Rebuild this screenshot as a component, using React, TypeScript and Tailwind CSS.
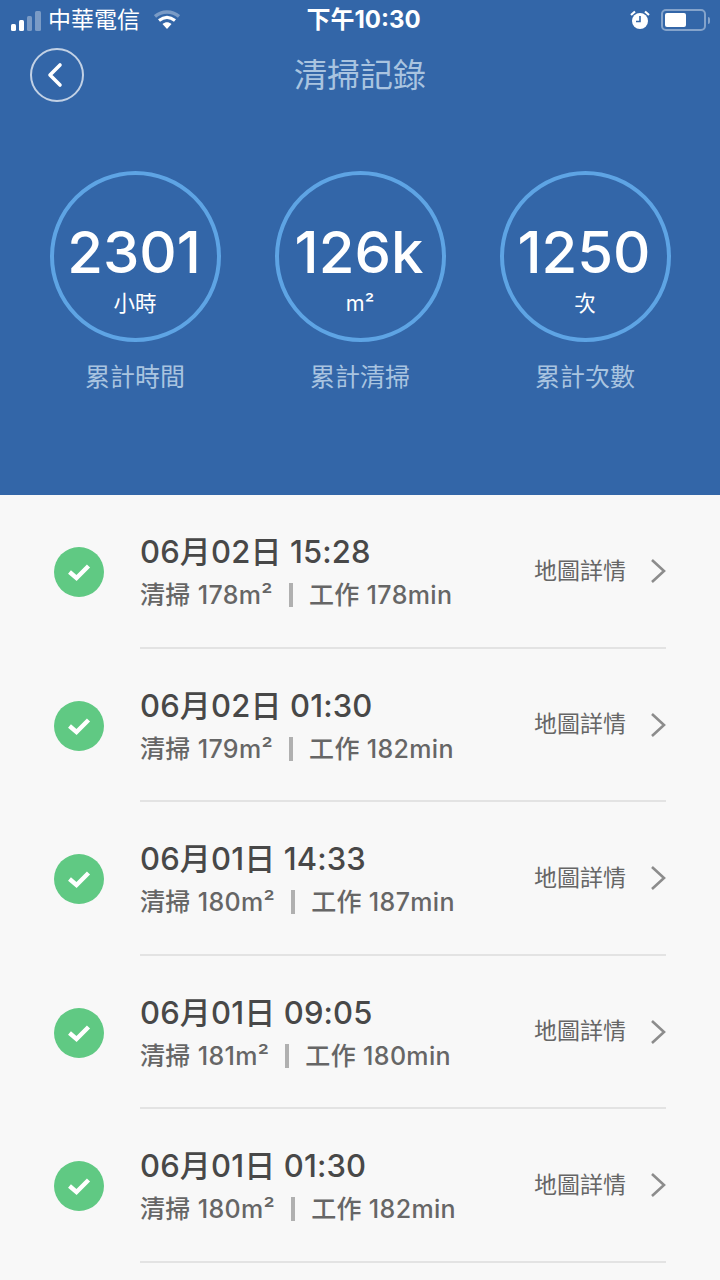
const cjk = "font-['Inter','Noto_Sans_CJK_TC',sans-serif]"

const stats = [
  { value: '2301', unit: '小時', label: '累計時間' },
  { value: '126k', unit: 'm²', label: '累計清掃' },
  { value: '1250', unit: '次', label: '累計次數' },
]

const records = [
  { date: '06月02日 15:28', area: '清掃 178m²', work: '工作 178min' },
  { date: '06月02日 01:30', area: '清掃 179m²', work: '工作 182min' },
  { date: '06月01日 14:33', area: '清掃 180m²', work: '工作 187min' },
  { date: '06月01日 09:05', area: '清掃 181m²', work: '工作 180min' },
  { date: '06月01日 01:30', area: '清掃 180m²', work: '工作 182min' },
]

function StatusBar() {
  return (
    <div className="flex h-[40px] items-center justify-between pl-[11px] pr-[10px] text-white">
      <div className="flex w-[260px] items-center">
        <div className="flex items-end gap-[3px] pt-[1px]">
          <span className="h-[7px] w-[5px] rounded-[1.5px] bg-white" />
          <span className="h-[11px] w-[5px] rounded-[1.5px] bg-white" />
          <span className="h-[15px] w-[5px] rounded-[1.5px] bg-white/35" />
          <span className="h-[20px] w-[6px] rounded-[1.5px] bg-white/35" />
        </div>
        <span className="ml-[7px] text-[23px] leading-none">中華電信</span>
        <svg width="26" height="20" viewBox="0 0 26 20" className="ml-[14px]">
          <path d="M1 6.5C8 0.5 18 0.5 25 6.5" fill="none" stroke="#fff" strokeOpacity="0.35" strokeWidth="3.4" />
          <path d="M5 10.5C10 6.5 16 6.5 21 10.5" fill="none" stroke="#fff" strokeWidth="3.2" />
          <path d="M8.5 14C11.5 11.5 14.5 11.5 17.5 14L13 19Z" fill="#fff" />
        </svg>
      </div>
      <span className="w-[200px] pl-[6px] text-center text-[24px] font-bold leading-none">下午10:30</span>
      <div className="flex w-[260px] items-center justify-end">
        <svg width="20" height="20" viewBox="0 0 20 20">
          <circle cx="10" cy="11" r="8" fill="#fff" />
          <path d="M10 6V11.5H6" fill="none" stroke="#3366a8" strokeWidth="1.6" />
          <path d="M1 5L5 1.5M19 5L15 1.5" stroke="#fff" strokeWidth="2.2" />
        </svg>
        <div className="ml-[11px] flex h-[22px] w-[45px] items-center rounded-[5px] border-2 border-white/40 p-[2px]">
          <div className="h-full w-[21px] rounded-[2px] bg-white" />
        </div>
        <span className="ml-[2px] h-[7px] w-[2px] rounded-r-sm bg-white/40" />
      </div>
    </div>
  )
}

function Stat({ value, unit, label }: { value: string; unit: string; label: string }) {
  return (
    <div className="flex w-[171px] flex-col items-center">
      <div className="flex h-[171px] w-[171px] flex-col items-center rounded-full border-4 border-[#5ea4e4] text-white">
        <span className="mt-[40px] -translate-x-[1px] text-[58px] font-medium leading-[74px]">{value}</span>
        <span className="mt-[1px] text-[21.5px] leading-[26px]">{unit}</span>
      </div>
      <span className="mt-[20px] text-[25px] leading-[30px] text-[#a9c4e0]">{label}</span>
    </div>
  )
}

function Row({ date, area, work }: { date: string; area: string; work: string }) {
  return (
    <div className="flex h-[153.5px] pl-[54px] pr-[54px]">
      <div className="mt-[52px] flex h-[50px] w-[50px] shrink-0 items-center justify-center rounded-full bg-[#60c983]">
        <svg width="24" height="20" viewBox="0 0 24 20">
          <path d="M2.5 10L9.5 16L21.5 4" fill="none" stroke="#fff" strokeWidth="4.4" />
        </svg>
      </div>
      <div className="ml-[36px] flex flex-1 border-b-2 border-[#e3e3e3]">
        <div className="flex flex-1 flex-col pt-[37px]">
          <span className="text-[31px] font-medium leading-[40px] tracking-[0.15px] text-[#484848]">{date}</span>
          <div className="mt-[7px] flex items-center text-[25px] font-medium leading-[32px] tracking-[0.35px] text-[#666666]">
            <span>{area}</span>
            <span className="mx-[16px] h-[24px] w-[4px] bg-[#b0b0b0]" />
            <span>{work}</span>
          </div>
        </div>
        <div className="flex h-[152px] items-center text-[#666666]">
          <span className="text-[23px] leading-none">地圖詳情</span>
          <svg width="16" height="26" viewBox="0 0 16 26" className="ml-[24px]">
            <path d="M2 2L14 13L2 24" fill="none" stroke="#8c8c8c" strokeWidth="2.6" />
          </svg>
        </div>
      </div>
    </div>
  )
}

export default function App() {
  return (
    <div className={`h-[1280px] w-[720px] overflow-hidden bg-[#f8f8f8] ${cjk}`}>
      <div className="h-[495px] bg-[#3366a8]">
        <StatusBar />
        <div className="flex h-[70px] items-center px-[30px]">
          <div className="flex h-[54px] w-[54px] items-center justify-center rounded-full border-2 border-white/70">
            <svg width="18" height="26" viewBox="0 0 18 26" className="-translate-x-[2px]">
              <path d="M14 3L4 13L14 23" fill="none" stroke="#fff" strokeWidth="3.6" strokeLinecap="round" strokeLinejoin="round" />
            </svg>
          </div>
          <span className="flex-1 pr-[54px] text-center text-[33px] leading-none text-[#a9c4e0]">清掃記錄</span>
        </div>
        <div className="mt-[61px] flex justify-center gap-[54px]">
          {stats.map((s) => (
            <Stat key={s.label} {...s} />
          ))}
        </div>
      </div>
      {records.map((r) => (
        <Row key={r.date} {...r} />
      ))}
    </div>
  )
}
